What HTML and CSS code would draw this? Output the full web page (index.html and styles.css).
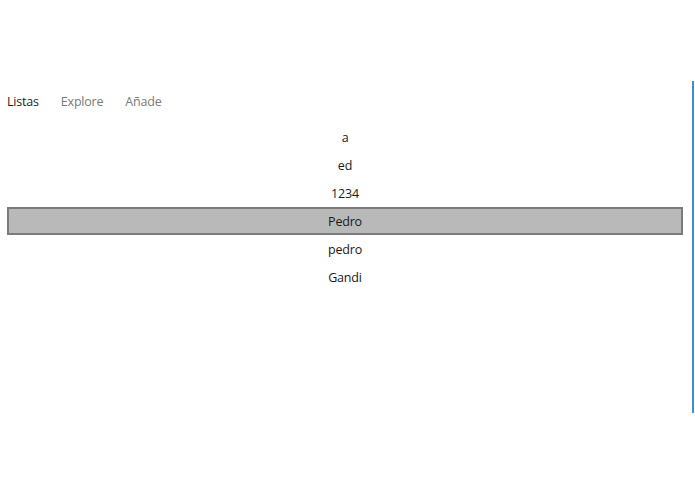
FILE: index.html
```html
<!DOCTYPE html>
<html lang="es">
<head>
<meta charset="utf-8">
<title>Listas</title>
<link rel="stylesheet" href="styles.css">
</head>
<body>
<div class="app">
  <div class="content">
    <nav class="tabs">
      <span class="tab active">Listas</span>
      <span class="tab">Explore</span>
      <span class="tab">Añade</span>
    </nav>
    <ul class="list">
      <li class="item">a</li>
      <li class="item">ed</li>
      <li class="item">1234</li>
      <li class="item selected">Pedro</li>
      <li class="item">pedro</li>
      <li class="item">Gandi</li>
    </ul>
  </div>
  <div class="scrollbar"></div>
</div>
</body>
</html>
```
FILE: styles.css
```css
html, body {
  margin: 0;
  padding: 0;
  background: #ffffff;
}
body {
  width: 695px;
  height: 494px;
  overflow: hidden;
  font-family: "Open Sans", "Noto Sans", sans-serif;
  font-size: 13px;
  color: #1a1a1a;
}
.app {
  display: flex;
  padding-top: 81px;
}
.content {
  flex: 1;
  display: flex;
  flex-direction: column;
}
.tabs {
  display: flex;
  gap: 22px;
  padding-left: 7px;
  height: 42px;
  align-items: center;
  box-sizing: border-box;
  padding-bottom: 1px;
}
.tab {
  color: #7a7a7a;
  font-size: 12.5px;
  letter-spacing: -0.2px;
}
.tab.active {
  color: #1f1f1f;
}
.list {
  list-style: none;
  margin: 0 9px 0 7px;
  padding: 0;
}
.item {
  height: 28px;
  display: flex;
  align-items: center;
  justify-content: center;
  box-sizing: border-box;
  font-size: 12.5px;
  letter-spacing: -0.2px;
  color: #1a1a1a;
}
.item.selected {
  background: #b9b9b9;
  border: 2px solid #7b7b7b;
}
.scrollbar {
  width: 2px;
  height: 332px;
  background: #3a8fd6;
  margin-right: 1px;
}
```
